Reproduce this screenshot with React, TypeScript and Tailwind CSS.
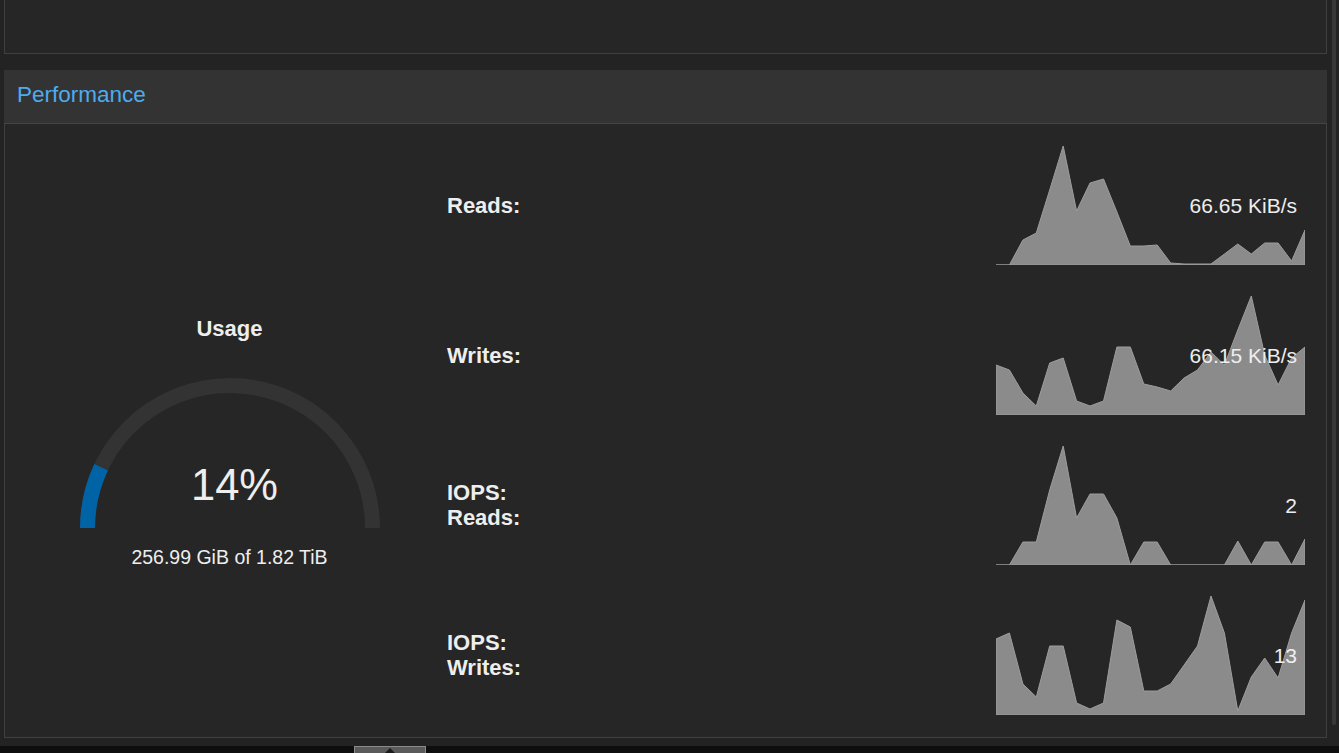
import React from 'react'

const FONT = { fontFamily: '"Liberation Sans", Arial, sans-serif' }

// sampled series, 24 points each, y in chart px (0 = top, 120 = baseline)
const READS = [120, 120, 95, 88, 45, 1, 66, 38, 34, 67, 101, 101, 100, 118, 119, 119, 119, 109, 99, 109, 98, 98, 116, 85]
const WRITES = [70, 75, 98, 111, 68, 63, 106, 111, 106, 52, 52, 89, 92, 96, 83, 75, 57, 70, 35, 1, 60, 90, 63, 52]
const IOPS_READS = [120, 120, 97, 97, 45, 1, 73, 49, 49, 73, 120, 97, 97, 120, 120, 120, 120, 120, 96, 120, 97, 97, 120, 94]
const IOPS_WRITES = [44, 38, 89, 102, 51, 51, 108, 114, 108, 25, 32, 96, 96, 89, 70, 51, 1, 38, 116, 82, 63, 83, 38, 5]

interface SparklineProps {
  data: number[]
  value: string
}

function Sparkline({ data, value }: SparklineProps) {
  const step = 309 / (data.length - 1)
  const pts = data.map((y, i) => `${(i * step).toFixed(1)},${y}`).join(' ')

  return (
    <div className="relative w-[309px] h-[120px] shrink-0">
      <svg width="309" height="120" viewBox="0 0 309 120" className="block">
        <polygon
          points={`0,120 ${pts} 309,120`}
          fill="#8b8b8b"
          stroke="#9d9d9d"
          strokeWidth={1}
          strokeLinejoin="round"
        />
      </svg>
      <span className="absolute right-[8px] top-1/2 -translate-y-1/2 text-[21px] leading-none text-[#eeeeee]">
        {value}
      </span>
    </div>
  )
}

function Gauge() {
  return (
    <div className="flex flex-col items-center">
      <div className="text-[22px] leading-[24px] font-bold text-[#eeeeee]">Usage</div>
      <div className="relative mt-[37px] w-[302px] h-[150px]">
        <svg width="302" height="150" viewBox="0 0 302 150" className="block">
          <path d="M 8.5 150 A 142.5 142.5 0 0 1 293.5 150" fill="none" stroke="#333333" strokeWidth={15} />
          <path d="M 8.5 150 A 142.5 142.5 0 0 1 22.1 89.3" fill="none" stroke="#0063a6" strokeWidth={15} />
        </svg>
        <div className="absolute left-0 right-0 top-[85px] text-center text-[43.5px] leading-[44px] text-[#eeeeee] pl-[10px]">
          14%
        </div>
      </div>
      <div className="mt-[18px] text-[19.5px] leading-[22px] text-[#eeeeee]">256.99 GiB of 1.82 TiB</div>
    </div>
  )
}

function MetricRow({ label, data, value }: { label: React.ReactNode; data: number[]; value: string }) {
  return (
    <div className="flex items-center h-[120px] pr-[21px]">
      <div className="flex-1 text-[22px] leading-[25px] font-bold text-[#eeeeee]">{label}</div>
      <Sparkline data={data} value={value} />
    </div>
  )
}

export default function App() {
  return (
    <div className="h-[753px] w-full overflow-hidden flex flex-col bg-[#232323]" style={FONT}>
      <div className="flex-1 flex min-h-0">
        {/* Main column */}
        <div className="w-[1327px] pl-[4px] flex flex-col">
          {/* Previous panel (scrolled off) */}
          <div className="h-[54px] bg-[#262626] border-x border-b border-[#404040]" />

          {/* Performance panel */}
          <div className="mt-[16px] bg-[#262626] border border-t-0 border-[#404040] flex flex-col">
            <div className="h-[54px] -mx-px px-[13px] bg-[#333333] border-b border-[#444444] flex items-center">
              <span className="text-[22.5px] leading-none text-[#4eacee] -mt-[2px]">Performance</span>
            </div>

            <div className="flex h-[613px]">
              {/* Usage gauge */}
              <div className="w-[442px] pl-[7px] pt-[193px]">
                <Gauge />
              </div>

              {/* Metrics */}
              <div className="flex-1 flex flex-col gap-[30px] pt-[21px]">
                <MetricRow label="Reads:" data={READS} value="66.65 KiB/s" />
                <MetricRow label="Writes:" data={WRITES} value="66.15 KiB/s" />
                <MetricRow
                  label={
                    <>
                      IOPS:
                      <br />
                      Reads:
                    </>
                  }
                  data={IOPS_READS}
                  value="2"
                />
                <MetricRow
                  label={
                    <>
                      IOPS:
                      <br />
                      Writes:
                    </>
                  }
                  data={IOPS_WRITES}
                  value="13"
                />
              </div>
            </div>
          </div>
        </div>

        {/* Scrollbar */}
        <div className="flex-1 flex justify-center pl-[2px]">
          <div className="w-[4px] h-[725px] bg-[#383838] rounded-b-sm" />
        </div>
      </div>

      {/* Bottom bar */}
      <div className="h-[7px] bg-[#0e0e0e] flex shrink-0">
        <div className="ml-[354px] w-[72px] h-[20px] border border-[#8a8a8a] bg-[#5a5a5a] flex justify-center">
          <div className="mt-[1px] w-0 h-0 border-x-[6px] border-x-transparent border-b-[6px] border-b-[#1a1a1a]" />
        </div>
      </div>
    </div>
  )
}
